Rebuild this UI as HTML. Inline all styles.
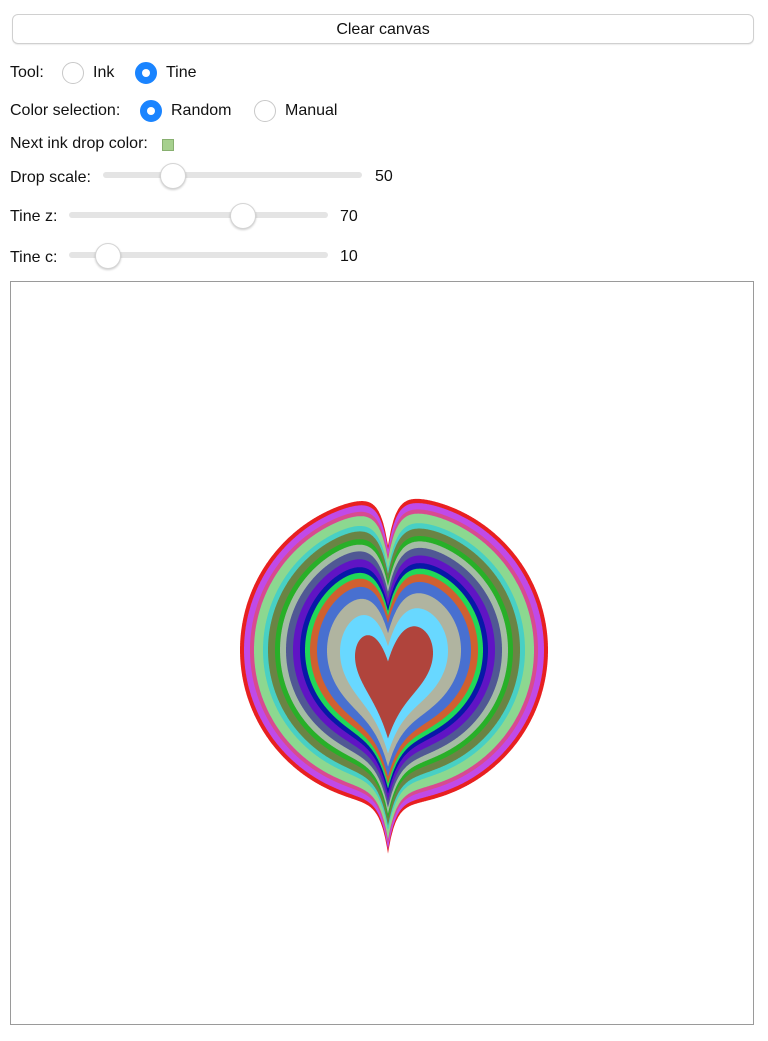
<!DOCTYPE html>
<html><head><meta charset="utf-8"><style>
body{margin:0;background:#fff;font-family:"Liberation Sans",Helvetica,Arial,sans-serif;font-size:16px;color:#111;width:768px;height:1041px;position:relative;overflow:hidden}
.a{position:absolute;white-space:nowrap}
.btn{position:absolute;left:12px;top:14px;width:740px;height:28px;border:1px solid #d0d0d0;border-radius:6px;background:#fff;box-shadow:0 1px 1px rgba(0,0,0,.08);text-align:center;line-height:29px}
.r{position:absolute;width:22px;height:22px;border:1px solid #c8c8c8;border-radius:50%;background:#fff;box-sizing:border-box}
.r.on{background:#1a84ff;border-color:#1a84ff}
.r.on::after{content:"";position:absolute;left:6px;top:6px;width:8px;height:8px;border-radius:50%;background:#fff}
.track{position:absolute;height:6px;background:#e4e4e4;border-radius:3px}
.th{position:absolute;width:26px;height:26px;border-radius:50%;background:#fff;border:1px solid #d4d4d4;box-shadow:0 1px 2px rgba(0,0,0,.2);box-sizing:border-box}
#cv{position:absolute;left:10px;top:281px;width:744px;height:744px;border:1px solid #9a9a9a;box-sizing:border-box}
</style></head><body>
<div class="btn">Clear canvas</div>
<div class="a" style="left:10px;top:64px">Tool:</div>
<div class="r" style="left:62px;top:62px"></div>
<div class="a" style="left:93px;top:64px">Ink</div>
<div class="r on" style="left:135px;top:62px"></div>
<div class="a" style="left:166px;top:64px">Tine</div>
<div class="a" style="left:10px;top:102px">Color selection:</div>
<div class="r on" style="left:140px;top:100px"></div>
<div class="a" style="left:171px;top:102px">Random</div>
<div class="r" style="left:254px;top:100px"></div>
<div class="a" style="left:285px;top:102px">Manual</div>
<div class="a" style="left:10px;top:135px">Next ink drop color:</div>
<div class="a" style="left:162px;top:139px;width:12px;height:12px;background:#a6d08e;border:1px solid #88b070;box-sizing:border-box"></div>
<div class="a" style="left:10px;top:169px">Drop scale:</div>
<div class="track" style="left:103px;top:172px;width:259px"></div>
<div class="th" style="left:160px;top:163px"></div>
<div class="a" style="left:375px;top:168px">50</div>
<div class="a" style="left:10px;top:208px">Tine z:</div>
<div class="track" style="left:69px;top:212px;width:259px"></div>
<div class="th" style="left:230px;top:203px"></div>
<div class="a" style="left:340px;top:208px">70</div>
<div class="a" style="left:10px;top:249px">Tine c:</div>
<div class="track" style="left:69px;top:252px;width:259px"></div>
<div class="th" style="left:95px;top:243px"></div>
<div class="a" style="left:340px;top:248px">10</div>
<div id="cv"><svg id="s" width="742" height="742" viewBox="11 282 742 742" style="display:block"></svg></div>
<script>
var rings=[[154,"#e82020"],[150,"#c04ae8"],[144,"#d84a90"],[140,"#8cd890"],[131,"#48d0c4"],[126,"#6a8444"],[119,"#28b028"],[114,"#a4bca4"],[108,"#505894"],[101,"#6014c4"],[94,"#0818a8"],[89,"#20d858"],[84,"#d06030"],[77,"#4870d0"],[67,"#b0b4a0"],[54,"#68d8ff"],[39,"#b0443c"]];
var cx=394,cy=650,lx=388,A=50,s=document.getElementById('s'),h='';
rings.forEach(function(r){var R=r[0],c=13-R*0.05,p=[];for(var i=0;i<=1440;i++){var t=i/1440*2*Math.PI,x=cx+R*Math.cos(t),y=cy+R*Math.sin(t);var d=Math.abs(x-lx);y+=A*Math.pow(2,-d/c);p.push(x.toFixed(1)+","+y.toFixed(1));}
h+='<polygon fill="'+r[1]+'" points="'+p.join(" ")+'"/>';});
s.innerHTML=h;
</script>
</body></html>
